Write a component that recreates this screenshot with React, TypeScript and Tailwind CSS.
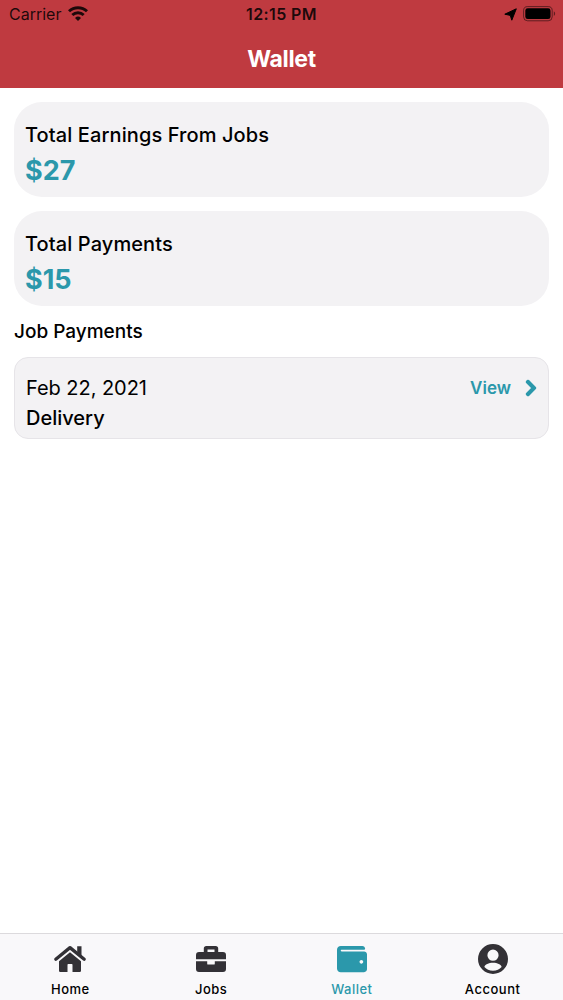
import { FaChevronRight, FaWallet } from "react-icons/fa";

const HomeIcon = ({ className }: { className?: string }) => (
  <svg viewBox="0 0 34 30" className={className} fill="currentColor">
    <path d="M2.8 15.2 17 3.6l14.2 11.6" fill="none" stroke="currentColor" strokeWidth="3.3" strokeLinecap="round" strokeLinejoin="round" />
    <path d="M24.2 2.2h4.3v10.6l-4.3-3.4z" />
    <path d="M17 8.2 28 17.3v9.5a1.3 1.3 0 0 1-1.3 1.3h-7.2v-7.3a.7.7 0 0 0-.7-.7h-3.6a.7.7 0 0 0-.7.7v7.3H7.3A1.3 1.3 0 0 1 6 26.8v-9.5z" />
  </svg>
);

const BriefcaseIcon = ({ className }: { className?: string }) => (
  <svg viewBox="0 0 30 30" className={className} fill="currentColor">
    <path
      fillRule="evenodd"
      d="M10.4 2h9.2a2.6 2.6 0 0 1 2.6 2.6V8H27a3 3 0 0 1 3 3v4.3H0V11a3 3 0 0 1 3-3h4.8V4.6A2.6 2.6 0 0 1 10.4 2zM11.5 5.4V8h7V5.4z"
    />
    <path d="M0 17.3h11.2v2.4a.9.9 0 0 0 .9.9h5.8a.9.9 0 0 0 .9-.9v-2.4H30V25a3 3 0 0 1-3 3H3a3 3 0 0 1-3-3z" />
  </svg>
);

const AccountIcon = ({ className }: { className?: string }) => (
  <svg viewBox="0 0 30 30" className={className} fill="currentColor">
    <path
      fillRule="evenodd"
      d="M15 0a15 15 0 1 1 0 30 15 15 0 0 1 0-30zM15 5.6a5.6 5.6 0 1 0 0 11.2 5.6 5.6 0 0 0 0-11.2zM15 18.8c-4.2 0-8.3 1.7-8.6 4.2C8.4 25.4 11.5 26.8 15 26.8s6.6-1.4 8.6-3.8c-.3-2.5-4.4-4.2-8.6-4.2z"
    />
  </svg>
);

const WifiIcon = () => (
  <svg viewBox="0 0 20 15" className="-mt-[2px] h-[15px] w-5" fill="none" stroke="currentColor" strokeWidth="2.9">
    <path d="M1 5.3a13 13 0 0 1 18 0" />
    <path d="M4.3 9a8.2 8.2 0 0 1 11.4 0" />
    <path d="M10 15l-3-3.1a4.3 4.3 0 0 1 6 0z" fill="currentColor" stroke="none" />
  </svg>
);

const LocationIcon = () => (
  <svg viewBox="0 0 13 13" className="size-[13px]" fill="currentColor">
    <path d="M12.3.8 7.8 12.2 6.3 7.4.8 6.2z" stroke="currentColor" strokeWidth="1" strokeLinejoin="round" />
  </svg>
);

const BatteryIcon = () => (
  <svg viewBox="0 0 33 16" className="h-4 w-[33px]">
    <rect x="0.6" y="0.6" width="28.6" height="14.2" rx="4" fill="none" stroke="#000" strokeOpacity="0.5" strokeWidth="1" />
    <rect x="2.3" y="2.3" width="25.2" height="10.8" rx="2.4" fill="#000" />
    <path d="M30.8 5.3c1.8.8 1.8 4 0 4.8z" fill="#000" fillOpacity="0.5" />
  </svg>
);

const totals = [
  { label: "Total Earnings From Jobs", amount: "$27" },
  { label: "Total Payments", amount: "$15" },
];

const payments = [{ date: "Feb 22, 2021", type: "Delivery" }];

const tabs = [
  { label: "Home", icon: HomeIcon, iconClass: "h-[30px] w-[34px]" },
  { label: "Jobs", icon: BriefcaseIcon, iconClass: "size-[30px]" },
  { label: "Wallet", icon: FaWallet, iconClass: "size-[30px]", active: true },
  { label: "Account", icon: AccountIcon, iconClass: "size-[30px]" },
];

const StatusBar = () => (
  <div className="grid h-[28px] grid-cols-3 items-center px-[9px] text-black/85">
    <div className="flex items-center gap-[7px]">
      <span className="text-[16px] leading-5">Carrier</span>
      <WifiIcon />
    </div>
    <span className="text-center text-[16px] font-semibold leading-5 tracking-[0.4px]">12:15 PM</span>
    <div className="-mr-[2px] flex items-center justify-end gap-[6px] text-black">
      <LocationIcon />
      <BatteryIcon />
    </div>
  </div>
);

const TabBar = () => (
  <nav className="grid h-[67px] grid-cols-4 border-t border-[#dcdadd] bg-[#f9f8fa] pt-[10px]">
    {tabs.map((tab) => (
      <div key={tab.label} className="flex flex-col items-center gap-[7px]">
        <tab.icon className={`${tab.iconClass} ${tab.active ? "text-[#2b98ab]" : "text-[#333136]"}`} />
        <span
          className={`text-[13px] font-medium leading-4 tracking-[0.5px] ${
            tab.active ? "text-[#2b98ab]" : "text-black"
          }`}
        >
          {tab.label}
        </span>
      </div>
    ))}
  </nav>
);

const App = () => {
  return (
    <div className="flex h-[1000px] w-[563px] flex-col overflow-hidden bg-white font-['Inter',sans-serif] text-black">
      <header className="h-[88px] bg-[#bf3a40]">
        <StatusBar />
        <h1 className="pt-[16px] text-center text-[23px] font-bold leading-[30px] tracking-[-0.3px] text-white">Wallet</h1>
      </header>

      <main className="flex-1 px-[14px] pt-[14px]">
        <div className="flex flex-col gap-[14px]">
          {totals.map((total) => (
            <section key={total.label} className="h-[95px] rounded-[28px] bg-[#f3f2f4] px-[11px] pt-[20px]">
              <h2 className="text-[20px] font-medium leading-[26px] tracking-[0.1px]">{total.label}</h2>
              <p className="pt-[6px] text-[27px] font-bold leading-[34px] text-[#2b98ab]">{total.amount}</p>
            </section>
          ))}
        </div>

        <h2 className="pt-[13px] text-[19px] font-medium leading-[26px]">Job Payments</h2>

        {payments.map((payment) => (
          <div
            key={payment.date}
            className="mt-[12px] flex h-[82px] justify-between rounded-[14px] border border-[#e6e4e8] bg-[#f3f2f4] px-[11px] pt-[16px]"
          >
            <div>
              <p className="text-[20px] leading-[29px] tracking-[-0.05px]">{payment.date}</p>
              <p className="text-[20px] font-medium leading-[30px]">{payment.type}</p>
            </div>
            <a href="#" className="flex h-[29px] items-center gap-[14px] text-[17px] font-semibold text-[#2b98ab]">
              View
              <FaChevronRight className="-mt-[2px] h-[18px] w-[12px]" stroke="currentColor" strokeWidth="36" />
            </a>
          </div>
        ))}
      </main>

      <TabBar />
    </div>
  );
};

export default App;
